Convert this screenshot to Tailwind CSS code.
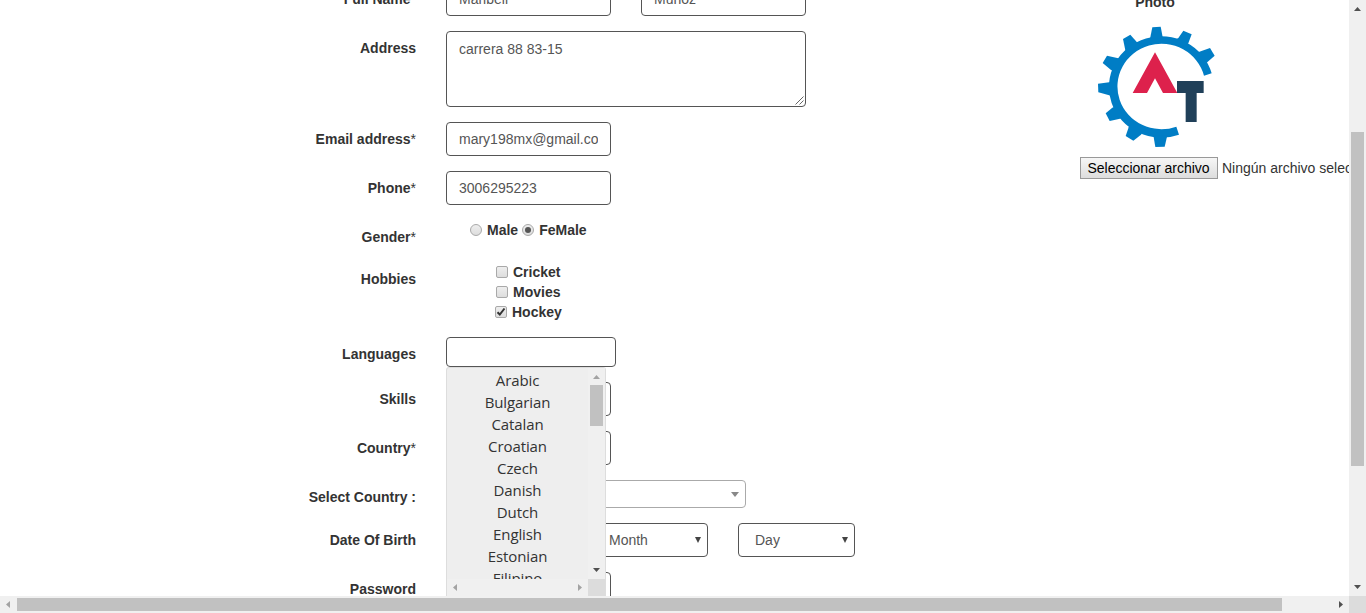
<!DOCTYPE html>
<html lang="en">
<head>
<meta charset="utf-8">
<title>Register</title>
<script src="https://cdn.jsdelivr.net/npm/@tailwindcss/browser@4"></script>
</head>
<body class="h-[613px] w-[1366px] overflow-hidden bg-white font-['Liberation_Sans',Arial,sans-serif] text-sm leading-5 text-[#333]">
<div class="grid h-[613px] grid-cols-[1349px_17px] grid-rows-[596px_17px]">
  <main class="flex overflow-hidden">
    <form class="-mt-[18px] flex w-[1080px] shrink-0 flex-col gap-[15px] text-[#555]">
      <div class="flex h-[34px] shrink-0 gap-[30px]">
        <label class="w-[416px] pt-[7px] text-right font-bold text-[#333]">Full Name<span class="font-normal">*</span></label>
        <div class="w-[165px] rounded border border-[#555] px-3 py-1.5">Maribell</div>
        <div class="w-[165px] rounded border border-[#555] px-3 py-1.5">Muñoz</div>
      </div>
      <div class="flex h-[76px] shrink-0 gap-[30px]">
        <label class="w-[416px] pt-[7px] text-right font-bold text-[#333]">Address</label>
        <div class="flex w-[360px] justify-between rounded border border-[#555] pt-[7px] pl-3">
          <span>carrera 88 83-15</span>
          <svg class="mr-px mb-px h-[9px] w-[9px] self-end" viewBox="0 0 9 9" fill="none" stroke="#555" stroke-width="0.9"><path d="M.5 8.5l8-8M4.5 8.500l4-4"/></svg>
        </div>
      </div>
      <div class="flex h-[34px] shrink-0 gap-[30px]">
        <label class="w-[416px] pt-[7px] text-right font-bold text-[#333]">Email address<span class="font-normal">*</span></label>
        <div class="w-[165px] rounded border border-[#555] px-3 py-1.5"><div class="overflow-hidden whitespace-nowrap">mary198mx@gmail.co</div></div>
      </div>
      <div class="flex h-[34px] shrink-0 gap-[30px]">
        <label class="w-[416px] pt-[7px] text-right font-bold text-[#333]">Phone<span class="font-normal">*</span></label>
        <div class="w-[165px] rounded border border-[#555] px-3 py-1.5">3006295223</div>
      </div>
      <div class="flex h-[27px] shrink-0 gap-[30px] font-bold text-[#333]">
        <label class="w-[416px] pt-[7px] text-right">Gender<span class="font-normal">*</span></label>
        <div class="flex h-5 items-center pl-6">
          <span class="h-3 w-3 rounded-full border border-[#a9a9a9] bg-linear-to-b from-[#eee] to-[#ddd]"></span>
          <span class="ml-[5px]">Male</span>
          <span class="ml-1 flex h-3 w-3 items-center justify-center rounded-full border border-[#a9a9a9] bg-linear-to-b from-[#eee] to-[#ddd]"><span class="h-1.5 w-1.5 rounded-full bg-[#555]"></span></span>
          <span class="ml-[5px]">FeMale</span>
        </div>
      </div>
      <div class="flex h-[60px] shrink-0 gap-[30px] font-bold text-[#333]">
        <label class="w-[416px] pt-[7px] text-right">Hobbies</label>
        <div class="flex flex-col pl-[49px]">
          <div class="flex h-5 items-center gap-[5px] pl-px"><span class="h-3 w-3 rounded-[2px] border border-[#a9a9a9] bg-linear-to-b from-[#eee] to-[#ddd]"></span>Cricket</div>
          <div class="flex h-5 items-center gap-[5px] pl-px"><span class="h-3 w-3 rounded-[2px] border border-[#a9a9a9] bg-linear-to-b from-[#eee] to-[#ddd]"></span>Movies</div>
          <div class="flex h-5 items-center gap-[5px]"><span class="flex h-3 w-3 items-center justify-center rounded-[2px] border border-[#a9a9a9] bg-linear-to-b from-[#eee] to-[#ddd]"><svg class="h-2.5 w-2.5" viewBox="0 0 10 10" fill="none" stroke="#333" stroke-width="2"><path d="M1.500 5.200l2.300 2.300L8.500 1.500"/></svg></span>Hockey</div>
        </div>
      </div>
      <div class="flex h-[30px] shrink-0 gap-[30px]">
        <label class="w-[416px] pt-[7px] text-right font-bold text-[#333]">Languages</label>
        <div class="relative w-[170px] rounded border border-[#555]">
          <div class="absolute top-[29px] -left-px z-10 grid h-[229px] w-[160px] grid-cols-[141px_17px] grid-rows-[211px_17px] rounded-t-[3px] border border-b-0 border-[#ddd] bg-[#eee]">
            <ul class="overflow-hidden pt-px text-center font-['Open_Sans','Noto_Sans',sans-serif] text-[15px] leading-[22px] tracking-[-0.1px] text-[#333]">
              <li>Arabic</li><li>Bulgarian</li><li>Catalan</li><li>Croatian</li><li>Czech</li><li>Danish</li><li>Dutch</li><li>English</li><li>Estonian</li><li>Filipino</li>
            </ul>
            <div class="flex flex-col items-center bg-[#f0f0f0] pt-[7px] pb-[7px]">
              <svg class="h-1 w-[7px] shrink-0" viewBox="0 0 7 4" fill="#a3a3a3"><path d="M0 4L3.500 0L7 4z"/></svg>
              <div class="mt-[6px] h-[41px] w-[13px] shrink-0 bg-[#c1c1c1]"></div>
              <svg class="mt-auto h-1 w-[7px] shrink-0" viewBox="0 0 7 4" fill="#505050"><path d="M0 0L3.500 4L7 0z"/></svg>
            </div>
            <div class="flex items-center justify-between bg-[#f0f0f0] pr-[6px] pl-[6px]">
              <svg class="h-[7px] w-1" viewBox="0 0 4 7" fill="#a3a3a3"><path d="M4 0L0 3.500L4 7z"/></svg>
              <svg class="h-[7px] w-1" viewBox="0 0 4 7" fill="#a3a3a3"><path d="M0 0L4 3.500L0 7z"/></svg>
            </div>
            <div class="bg-[#dcdcdc]"></div>
          </div>
        </div>
      </div>
      <div class="flex h-[34px] shrink-0 gap-[30px]">
        <label class="w-[416px] pt-[7px] text-right font-bold text-[#333]">Skills</label>
        <div class="w-[165px] rounded border border-[#555]"></div>
      </div>
      <div class="flex h-[34px] shrink-0 gap-[30px]">
        <label class="w-[416px] pt-[7px] text-right font-bold text-[#333]">Country<span class="font-normal">*</span></label>
        <div class="w-[165px] rounded border border-[#555]"></div>
      </div>
      <div class="flex h-7 shrink-0 gap-[30px]">
        <label class="w-[416px] pt-[7px] text-right font-bold text-[#333]">Select Country :</label>
        <div class="flex w-[300px] items-center justify-end rounded border border-[#aaa] pr-1.5"><svg class="h-[5px] w-2" viewBox="0 0 8 5" fill="#888"><path d="M0 0h8L4 5z"/></svg></div>
      </div>
      <div class="flex h-[34px] shrink-0 gap-[30px]">
        <label class="w-[416px] pt-[7px] text-right font-bold text-[#333]">Date Of Birth</label>
        <div class="w-[115px] rounded border border-[#555]"></div>
        <div class="flex w-[117px] items-center justify-between rounded border border-[#555] pr-1.5 pl-[17px]">Month<svg class="h-1.5 w-1.5" viewBox="0 0 6 6" fill="#444"><path d="M0 0h6L3 6z"/></svg></div>
        <div class="flex w-[117px] items-center justify-between rounded border border-[#555] pr-1.5 pl-4">Day<svg class="h-1.5 w-1.5" viewBox="0 0 6 6" fill="#444"><path d="M0 0h6L3 6z"/></svg></div>
      </div>
      <div class="flex h-[34px] shrink-0 gap-[30px]">
        <label class="w-[416px] pt-[7px] text-right font-bold text-[#333]">Password</label>
        <div class="w-[165px] rounded border border-[#555]"></div>
      </div>
    </form>
    <aside class="-mt-2 flex w-[269px] flex-col overflow-hidden">
      <div class="w-[150px] text-center font-bold">Photo</div>
      <svg class="mt-[14px] ml-[17.330px] h-[122px] w-[118px] shrink-0" viewBox="22 18 354 366">
        <g fill="#007dc5">
          <path d="M366 160A157 152 0 1 0 268 344L260 320A132 128 0 1 1 343 167z"/>
          <path d="M188 22L213 20L220 56L181 56z"/>
          <path d="M281 32L306 43L296 70L285 80L256 60L266 54z"/>
          <path d="M361 84L375 107L350 129L338 134L322 105L327 96z"/>
          <path d="M100 57L122 44L142 67L150 80L115 98L107 91z"/>
          <path d="M52 107L39 129L65 151L75 150L97 117L86 115z"/>
          <path d="M25 191L26 217L64 227L64 186z"/>
          <path d="M48 280L60 303L91 296L104 292L80 258L68 263z"/>
          <path d="M108 348L131 362L154 344L160 335L125 312L117 322z"/>
          <path d="M197 381L225 380L233 346L191 346z"/>
        </g>
        <path d="M196 97l67 122h-43l-24-44-24 44h-43z" fill="#dd214c"/>
        <path d="M262 183h80v36h-21v87h-33v-87h-26z" fill="#204059"/>
      </svg>
      <div class="mt-[9px] flex h-[22px] items-center gap-1 whitespace-nowrap">
        <div class="flex h-[22px] w-[138px] shrink-0 items-center justify-center border border-[#999] bg-linear-to-b from-[#f6f6f6] to-[#dddddd] pr-px text-black">Seleccionar archivo</div>
        <span>Ningún archivo seleccionado</span>
      </div>
    </aside>
  </main>
  <div class="flex flex-col items-center bg-[#f0f0f0] pt-[7px] pb-[7px]">
    <svg class="h-1 w-[7px] shrink-0" viewBox="0 0 7 4" fill="#505050"><path d="M0 4L3.500 0L7 4z"/></svg>
    <div class="mt-[121px] h-[334px] w-[13px] shrink-0 bg-[#c1c1c1]"></div>
    <svg class="mt-auto h-1 w-[7px] shrink-0" viewBox="0 0 7 4" fill="#505050"><path d="M0 0L3.500 4L7 0z"/></svg>
  </div>
  <div class="flex items-center bg-[#f0f0f0] pr-[6px] pl-[6px]">
    <svg class="h-[7px] w-1" viewBox="0 0 4 7" fill="#a3a3a3"><path d="M4 0L0 3.500L4 7z"/></svg>
    <div class="ml-[7px] h-[13px] w-[1265px] bg-[#c1c1c1]"></div>
    <svg class="ml-auto h-[7px] w-1" viewBox="0 0 4 7" fill="#505050"><path d="M0 0L4 3.500L0 7z"/></svg>
  </div>
  <div class="bg-[#dcdcdc]"></div>
</div>
</body>
</html>
